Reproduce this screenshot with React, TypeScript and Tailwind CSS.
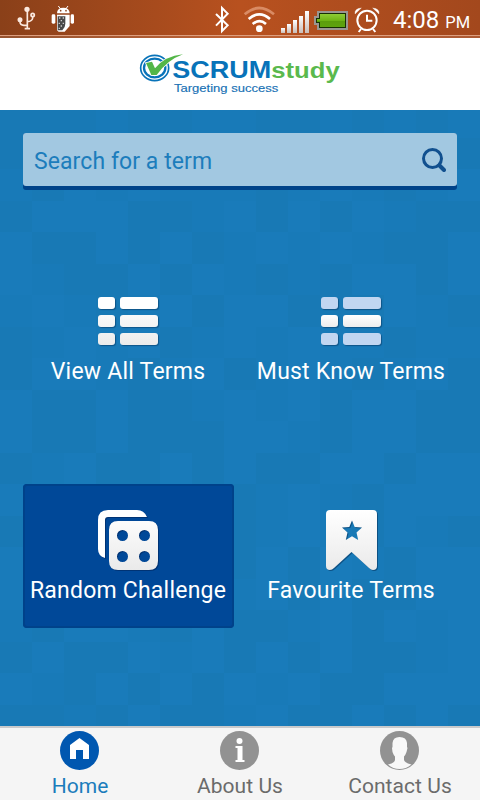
import type { ReactNode } from 'react';

// d = darker tile, l = lighter tile, . = plain
const TILE_ROWS = [
  'ddd.dd..dd.d.d.',
  'd..l..d.l..l..d',
  '.dl.l...d.l.d.l',
  'dllldd.ldldl.dd',
  'lddldld.l.l.ddl',
  'l.ddldl.d.dlldl',
  '.l.d.ldlldddl.d',
  'd.l.ld.l.l..d..',
  'dll.d.ld.l.d.ld',
  'lddldd.l.ldlldd',
  'lddldddll.dlldd',
  'd.lddldlddlldll',
  'l.dlld.d.l.dlll',
  'dlld.l.d.l.dl.d',
  'lddl.lddldl.dll',
  'l.dl.d..ldlddll',
  '.dll.dldd.ldl.l',
  'dlddl.ldldldd.l',
  'l.dldldl.lddlll',
  'dd.dldd.lddldld',
];

const TILE_COLORS: Record<string, string> = {
  d: '#1879b5',
  l: '#197bba',
  '.': '#187ab8',
};

function TileBackdrop() {
  return (
    <svg className="absolute inset-0 h-full w-full" viewBox="0 0 480 616" shapeRendering="crispEdges">
      {TILE_ROWS.map((row, y) =>
        row.split('').map((tile, x) => (
          <rect key={`${x}-${y}`} x={x * 32} y={y * 31.5 - 4} width="32" height="32" fill={TILE_COLORS[tile]} />
        )),
      )}
    </svg>
  );
}

function StatusBar() {
  return (
    <div className="relative flex h-[38px] bg-linear-to-r from-[#8a4019] via-[#b8511f] to-[#a3481d] text-white">
      <div className="absolute inset-x-0 top-[35px] h-px bg-[#dd9f80]" />
      <div className="absolute inset-x-0 top-9 h-0.5 bg-white/10" />
      <svg className="ml-4 h-[38px] w-[21px]" viewBox="48 0 63 114" fill="none" stroke="#fbe9df" strokeWidth="5">
        <path d="M82 28v58M74 86h16M60 60v5q0 10 12 11h10M98 50v4q-1 10-16 11" />
        <circle cx="81" cy="28" r="5.5" fill="#fbe9df" />
        <circle cx="60" cy="59" r="5" fill="#fbe9df" />
        <circle cx="98" cy="45" r="5" />
      </svg>
      <svg className="ml-[13px] h-[38px] w-[26px]" viewBox="150 0 78 114">
        <path d="m175 18 6 8M204 18l-6 8" stroke="#fff" strokeWidth="3" />
        <path d="M171 40q0-17 19-17t19 17Z" fill="#fff" />
        <path d="M171 44h38v34l-15 17h-18l-5-4Z" fill="#fff" />
        <rect x="155" y="43" width="11" height="28" rx="4" fill="#fff" />
        <rect x="212" y="43" width="10" height="28" rx="4" fill="#fff" />
        <circle cx="182" cy="32" r="2.5" fill="#8a431f" />
        <circle cx="198" cy="32" r="2.5" fill="#8a431f" />
        <path d="M173 49h23v22q0 11-9 20h-14Z" fill="#484848" />
        <path d="M177 54h4M188 54h4M182 62h4M176 70h4M188 70h4M182 78h4M176 85h4" stroke="#ccc" strokeWidth="4" />
      </svg>
      <svg className="ml-auto h-[38px] w-[18px]" viewBox="39 0 54 114" fill="none" stroke="#fff" strokeWidth="6">
        <path d="m48 42 35 34-17 17V24l17 17-35 36" />
      </svg>
      <svg className="ml-3 h-[38px] w-[33px]" viewBox="129 0 99 114" fill="none" stroke="#fff" strokeWidth="8">
        <path d="M134 43q43-38 88 0" stroke="#d98b64" />
        <path d="M146 57q32-28 64 0M158 72q20-17 40 0" />
        <circle cx="178" cy="86" r="10" fill="#fff" stroke="none" />
      </svg>
      <svg className="ml-1 h-[38px] w-[30px]" viewBox="240 0 90 114">
        <defs>
          <linearGradient id="signal" x2="0" y2="1">
            <stop stopColor="#fff" />
            <stop offset="1" stopColor="#c9bdb8" />
          </linearGradient>
        </defs>
        <g fill="url(#signal)">
          <rect x="243" y="84" width="12" height="15" />
          <rect x="261" y="72" width="12" height="27" />
          <rect x="279" y="60" width="12" height="39" />
          <rect x="297" y="48" width="12" height="51" />
          <rect x="315" y="33" width="12" height="66" />
        </g>
      </svg>
      <svg className="ml-[3px] h-[38px] w-9" viewBox="339 0 108 114">
        <defs>
          <linearGradient id="charge" x2="0" y2="1">
            <stop stopColor="#8fcc35" />
            <stop offset=".5" stopColor="#6fb516" />
            <stop offset=".55" stopColor="#5b9d0c" />
            <stop offset="1" stopColor="#5fa30f" />
          </linearGradient>
        </defs>
        <path d="M351 33h93v57h-93V75h-9V48h9Z" fill="#9a9691" />
        <path d="M357 39h81v45h-81V69h-9V54h9Z" fill="#173003" />
        <path d="M360 42h75v39h-75V66h-9v-9h9Z" fill="url(#charge)" />
      </svg>
      <svg className="ml-1 h-[38px] w-7" viewBox="459 0 84 114" fill="none" stroke="#fff" strokeWidth="6">
        <circle cx="501" cy="61" r="29" />
        <path d="M501 44v18h16M483 87l-7 9M519 87l7 9" />
        <path d="M465 42q-2-16 19-18ZM537 42q2-16-19-18Z" fill="#fff" strokeWidth="1" />
      </svg>
      <div className="ml-3 flex w-[87px] items-baseline whitespace-nowrap pt-px leading-[38px]">
        <span className="text-[24px]">4:08</span>
        <span className="ml-1.5 text-[16.5px]">PM</span>
      </div>
    </div>
  );
}

function Logo() {
  return (
    <svg className="h-[70px] w-[220px]" viewBox="0 0 660 210" fontFamily="Liberation Sans, sans-serif">
      <g fill="none" stroke="#0873b9">
        <ellipse cx="74" cy="84" rx="42" ry="38" strokeWidth="5" />
        <ellipse cx="74" cy="84" rx="32" ry="28" strokeWidth="7" />
      </g>
      <path
        d="M48 69l18-4 9 20Q105 48 159 43 112 60 80 105H64Z"
        fill="#53b648"
        stroke="#fff"
        strokeWidth="5"
        paintOrder="stroke"
      />
      <text x="127" y="114" fontSize="69" fontWeight="700" fill="#0873b9" textLength="297" lengthAdjust="spacingAndGlyphs">
        SCRUM
      </text>
      <text x="424" y="114" fontSize="65" fontWeight="700" fill="#5ab94d" textLength="205" lengthAdjust="spacingAndGlyphs">
        study
      </text>
      <text x="132" y="156" fontSize="31" fill="#1670b4" stroke="#1670b4" strokeWidth=".4" textLength="313" lengthAdjust="spacingAndGlyphs">
        Targeting success
      </text>
    </svg>
  );
}

function ListIcon({ highlight }: { highlight?: boolean }) {
  const rows = highlight
    ? ['bg-[#c1d6f1]', 'bg-linear-to-b from-white to-[#ededed]', 'bg-[#c1d6f1]']
    : ['bg-white', 'bg-linear-to-b from-[#f9f9f9] to-[#f3f3f3]', 'bg-linear-to-b from-[#f1f1f1] to-[#ebebeb]'];
  return (
    <div className="flex w-[60px] flex-col gap-1.5">
      {rows.map((fill, i) => (
        <div key={i} className="flex gap-[5px]">
          <div className={`h-3 w-[17px] rounded-[3px] shadow-[1px_1px_1px_rgba(0,40,80,0.45)] ${fill}`} />
          <div className={`h-3 w-[38px] rounded-[3px] shadow-[1px_1px_1px_rgba(0,40,80,0.45)] ${fill}`} />
        </div>
      ))}
    </div>
  );
}

function DiceIcon() {
  return (
    <svg className="h-[60px] w-[60px] overflow-visible drop-shadow-[1px_1px_0.5px_rgba(0,30,80,0.5)]" viewBox="0 0 60 60">
      <defs>
        <linearGradient id="dice" x2="0" y2="1">
          <stop stopColor="#fcfcfc" />
          <stop offset="1" stopColor="#eaeaea" />
        </linearGradient>
      </defs>
      <path d="M7 48Q0 46 0 39V10Q0 0 10 0h29q7 0 10 7H10q-3 0-3 3Z" fill="#fff" />
      <path
        fillRule="evenodd"
        fill="url(#dice)"
        d="M20 11h31q9 0 9 9v31q0 9-9 9H20q-9 0-9-9V20q0-9 9-9ZM19 25.500a5.500 5.500 0 1 0 11 0a5.500 5.500 0 1 0-11 0M41 25.500a5.500 5.500 0 1 0 11 0a5.500 5.500 0 1 0-11 0M19 46.500a5.500 5.500 0 1 0 11 0a5.500 5.500 0 1 0-11 0M41 46.500a5.500 5.500 0 1 0 11 0a5.500 5.500 0 1 0-11 0"
      />
    </svg>
  );
}

function BookmarkIcon() {
  return (
    <svg className="h-[60px] w-[51px] overflow-visible drop-shadow-[1px_1px_0.5px_rgba(0,40,80,0.5)]" viewBox="0 0 51 60">
      <defs>
        <linearGradient id="bookmark" x2="0" y2="1">
          <stop stopColor="#fff" />
          <stop offset="1" stopColor="#eaeaea" />
        </linearGradient>
      </defs>
      <path
        fillRule="evenodd"
        fill="url(#bookmark)"
        d="M4 0h43q4 0 4 4v52q0 4-4 4-2 0-4-2L25.500 42 8 58q-2 2-4 2-4 0-4-4V4q0-4 4-4ZM26 10.500l2.700 6.500 7.300.600-5.500 4.900 1.700 7.500-6.200-3.800-6.200 3.800 1.700-7.500-5.500-4.900 7.300-.600Z"
      />
    </svg>
  );
}

type MenuItemProps = {
  icon: ReactNode;
  label: string;
  active?: boolean;
  spaced?: boolean;
};

function MenuItem({ icon, label, active, spaced }: MenuItemProps) {
  return (
    <button
      className={`flex h-36 w-[211px] flex-col items-center rounded-[4px] pt-[26px] ${
        active ? 'bg-[#004898] shadow-[inset_0_0_0_2px_#00428a]' : ''
      }`}
    >
      <div className="flex h-[60px] items-end justify-center pr-px">{icon}</div>
      <span
        className={`whitespace-nowrap pr-px text-[23px] leading-7 tracking-[0.22px] text-white ${
          spaced ? 'mt-[13px]' : 'mt-[7px]'
        }`}
      >
        {label}
      </span>
    </button>
  );
}

function NavItem({ icon, label, active }: { icon: ReactNode; label: string; active?: boolean }) {
  return (
    <button className={`flex w-40 flex-col items-center pt-[3px] ${active ? 'text-[#1b7dbc]' : 'text-[#6b6b6b]'}`}>
      <div className="pr-px">{icon}</div>
      <span className="mt-0.5 whitespace-nowrap text-[21px] leading-7 tracking-[0.05px]">{label}</span>
    </button>
  );
}

export default function App() {
  return (
    <div className="flex h-[800px] w-[480px] flex-col overflow-hidden font-['Roboto',sans-serif]">
      <StatusBar />

      <header className="flex h-[72px] bg-white pl-[130px] pt-0.5">
        <Logo />
      </header>

      <main className="relative h-[616px] bg-[#187ab8]">
        <TileBackdrop />
        <div className="relative px-[23px] pt-[23px]">
          <div className="rounded-[3px] bg-[#004389] pb-1">
            <div className="flex h-[53px] items-center justify-between rounded-[3px] bg-[#a2c8e1] px-[11px]">
              <span className="pt-[5px] text-[23px] tracking-[0.08px] text-[#1c7dbc]">Search for a term</span>
              <svg className="h-6 w-6" viewBox="0 0 24 24" fill="none" stroke="#11508f">
                <circle cx="10.500" cy="10.500" r="9" strokeWidth="3" />
                <path d="m17.500 17.500 4.500 4.500" strokeWidth="4" strokeLinecap="round" />
              </svg>
            </div>
          </div>

          <div className="mt-[69px] grid grid-cols-2 gap-x-3 gap-y-[81px]">
            <MenuItem icon={<ListIcon />} label="View All Terms" spaced />
            <MenuItem icon={<ListIcon highlight />} label="Must Know Terms" spaced />
            <MenuItem icon={<DiceIcon />} label="Random Challenge" active />
            <MenuItem icon={<BookmarkIcon />} label="Favourite Terms" />
          </div>
        </div>
      </main>

      <nav className="flex h-[74px] border-t-2 border-[#c8cacc] bg-[#f5f5f5]">
        <NavItem
          active
          label="Home"
          icon={
            <svg className="h-[39px] w-[39px]" viewBox="0 0 39 39">
              <circle cx="19.500" cy="19.500" r="19.500" fill="#0057b0" />
              <path d="M19.500 7 29 14v14h-6v-9h-7v9h-6V14Z" fill="#fff" />
            </svg>
          }
        />
        <NavItem
          label="About Us"
          icon={
            <svg className="h-[39px] w-[39px]" viewBox="0 0 39 39">
              <circle cx="19.500" cy="19.500" r="19.500" fill="#929292" />
              <circle cx="19.500" cy="10" r="3" fill="#fff" />
              <path d="M15.500 15h7v14h2v2h-9v-2h2V17h-2Z" fill="#fff" />
            </svg>
          }
        />
        <NavItem
          label="Contact Us"
          icon={
            <svg className="h-[39px] w-[39px]" viewBox="0 0 39 39">
              <circle cx="19.500" cy="19.500" r="19.500" fill="#929292" />
              <path
                d="M19.500 6q7 0 7.500 6v4l.500 1-1 4q-1 3-2.500 4.500V29q1 3 7.500 4.500-5.500 4.500-12 4.500T8 33.500Q14.500 32 15 29v-3.500Q13.500 24 12.500 21l-.500-4 .500-1v-4Q13 6 19.500 6Z"
                fill="#f8f8f8"
              />
            </svg>
          }
        />
      </nav>
    </div>
  );
}
